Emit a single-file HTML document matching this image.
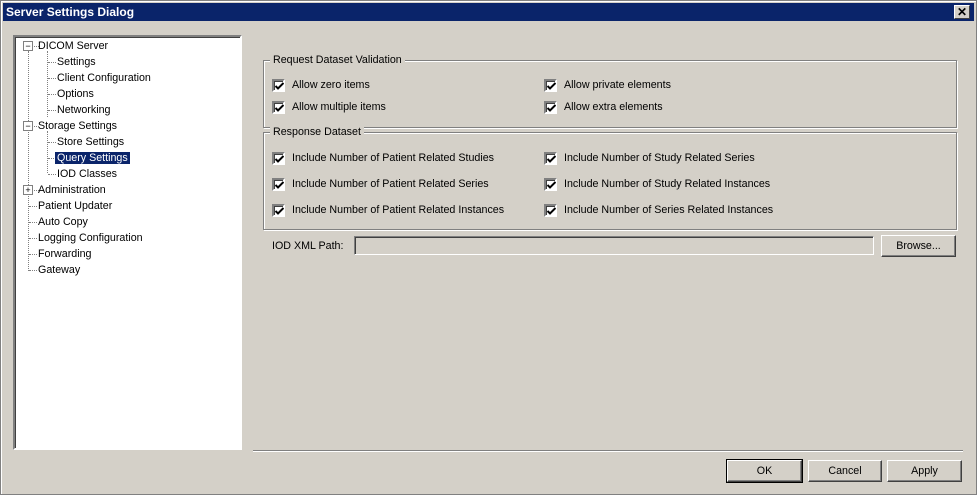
<!DOCTYPE html><html><head><style>
body{margin:0;width:977px;height:495px;background:#d4d0c8;font-family:"Liberation Sans",sans-serif;font-size:10.7px;color:#000;position:relative;overflow:hidden}
.a{position:absolute}
.win{left:0;top:0;width:975px;height:493px;border:1px solid #808080;box-shadow:inset 1px 1px #fff}
.title{left:3px;top:3px;width:971px;height:18px;background:#0a246a;color:#fff;font-weight:bold;font-size:12px;line-height:18px;padding-left:3px;box-sizing:border-box}
.x{left:954px;top:5px;width:14px;height:12px;background:#d4d0c8;border:1px solid;border-color:#fff #404040 #404040 #fff;color:#000;font-size:12px;line-height:12px;text-align:center;font-weight:bold}
.tree{left:13px;top:35px;width:229px;height:415px;background:#fff;border:2px solid;border-color:#808080 #fff #fff #808080;box-sizing:border-box;box-shadow:inset 1px 1px #404040}
.t{position:absolute;line-height:14px;white-space:nowrap}
.sel{background:#0a246a;color:#fff;padding:0 2px;margin-left:-2px}
.box{position:absolute;width:8px;height:8px;border:1px solid #808080;background:#fff;font-size:9px;line-height:8px;text-align:center;color:#000}
.vl{position:absolute;border-left:1px dotted #808080;width:0}
.hl{position:absolute;border-top:1px dotted #808080;height:0}
.grp{position:absolute;border:1px solid #808080;box-shadow:1px 1px #fff,inset 1px 1px #fff}
.gl{position:absolute;background:#d4d0c8;padding:0 3px;top:-7px;left:6px;line-height:13px}
.cb{position:absolute;width:9px;height:9px;background:#fff;border:2px solid;border-color:#808080 #fff #fff #808080;box-shadow:inset 1px 1px #404040}
.cb svg{position:absolute;left:1px;top:1px}
.lb{position:absolute;line-height:13px;white-space:nowrap}
.btn{position:absolute;height:22px;background:#d4d0c8;border:1px solid;border-color:#fff #404040 #404040 #fff;box-shadow:inset -1px -1px #808080;box-sizing:border-box;text-align:center;line-height:20px}
</style></head><body>
<div class="a win"></div>
<div class="a title">Server Settings Dialog</div>
<div class="a x">✕</div>
<div class="a tree">
<div class="vl" style="left:13px;top:14px;height:220px"></div>
<div class="vl" style="left:32px;top:14px;height:66px"></div>
<div class="vl" style="left:32px;top:94px;height:42px"></div>
<div class="box" style="left:8px;top:4px">−</div>
<div class="hl" style="left:19px;top:9px;width:5px"></div>
<div class="t" style="left:23px;top:2px">DICOM Server</div>
<div class="hl" style="left:33px;top:25px;width:8px"></div><div class="t" style="left:42px;top:18px">Settings</div>
<div class="hl" style="left:33px;top:41px;width:8px"></div><div class="t" style="left:42px;top:34px">Client Configuration</div>
<div class="hl" style="left:33px;top:57px;width:8px"></div><div class="t" style="left:42px;top:50px">Options</div>
<div class="hl" style="left:33px;top:73px;width:8px"></div><div class="t" style="left:42px;top:66px">Networking</div>
<div class="box" style="left:8px;top:84px">−</div>
<div class="hl" style="left:19px;top:89px;width:5px"></div>
<div class="t" style="left:23px;top:82px">Storage Settings</div>
<div class="hl" style="left:33px;top:105px;width:8px"></div><div class="t" style="left:42px;top:98px">Store Settings</div>
<div class="hl" style="left:33px;top:121px;width:8px"></div><div class="t" style="left:42px;top:114px"><span class="sel">Query Settings</span></div>
<div class="hl" style="left:33px;top:137px;width:8px"></div><div class="t" style="left:42px;top:130px">IOD Classes</div>
<div class="box" style="left:8px;top:148px">+</div>
<div class="hl" style="left:19px;top:153px;width:5px"></div>
<div class="t" style="left:23px;top:146px">Administration</div>
<div class="hl" style="left:14px;top:169px;width:8px"></div><div class="t" style="left:23px;top:162px">Patient Updater</div>
<div class="hl" style="left:14px;top:185px;width:8px"></div><div class="t" style="left:23px;top:178px">Auto Copy</div>
<div class="hl" style="left:14px;top:201px;width:8px"></div><div class="t" style="left:23px;top:194px">Logging Configuration</div>
<div class="hl" style="left:14px;top:217px;width:8px"></div><div class="t" style="left:23px;top:210px">Forwarding</div>
<div class="hl" style="left:14px;top:233px;width:8px"></div><div class="t" style="left:23px;top:226px">Gateway</div>
</div>

<div class="grp" style="left:263px;top:60px;width:692px;height:66px"><div class="gl">Request Dataset Validation</div></div>
<div class="grp" style="left:263px;top:132px;width:692px;height:96px"><div class="gl">Response Dataset</div></div>

<div id="cbs"></div>
<script>
var rows=[[79,"Allow zero items","Allow private elements"],[101,"Allow multiple items","Allow extra elements"],[152,"Include Number of Patient Related Studies","Include Number of Study Related Series"],[178,"Include Number of Patient Related Series","Include Number of Study Related Instances"],[204,"Include Number of Patient Related Instances","Include Number of Series Related Instances"]];
var h="",chk='<svg width="9" height="9"><path d="M0.5 4 L3 6.5 L8.5 1" stroke="#000" stroke-width="2" fill="none"/></svg>';
rows.forEach(function(r){[[272,r[1]],[544,r[2]]].forEach(function(c){h+='<div class="cb" style="left:'+c[0]+'px;top:'+r[0]+'px">'+chk+'</div><div class="lb" style="left:'+(c[0]+20)+'px;top:'+r[0]+'px">'+c[1]+'</div>';});});
document.getElementById("cbs").innerHTML=h;
</script>

<div class="lb" style="left:272px;top:240px">IOD XML Path:</div>
<div class="a" style="left:354px;top:236px;width:520px;height:19px;border:1px solid;border-color:#808080 #fff #fff #808080;box-sizing:border-box;box-shadow:inset 1px 1px #404040"></div>
<div class="btn" style="left:881px;top:235px;width:75px">Browse...</div>

<div class="a" style="left:253px;top:450px;width:710px;height:1px;background:#808080;border-bottom:1px solid #fff"></div>
<div class="btn" style="left:727px;top:460px;width:75px;outline:1px solid #000">OK</div>
<div class="btn" style="left:808px;top:460px;width:74px">Cancel</div>
<div class="btn" style="left:887px;top:460px;width:75px">Apply</div>
</body></html>
